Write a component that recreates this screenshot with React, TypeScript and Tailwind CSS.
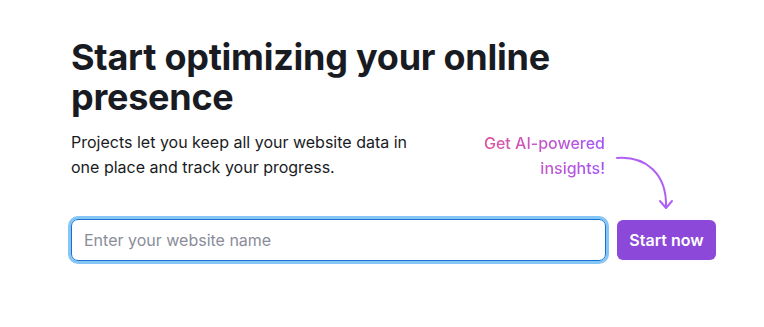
export default function App() {
  return (
    <div className="min-h-[327px] w-full bg-white font-['Inter',sans-serif]">
      <div className="w-[645px] pl-[71px] pt-[37px] box-content">
        <h1 className="w-[520px] text-[36px] font-bold leading-[40px] tracking-[-0.25px] text-[#191b23]">
          Start optimizing your online presence
        </h1>
        <div className="mt-[13px] flex h-[89px] items-start justify-between">
          <p className="w-[345px] text-[16px] leading-[25px] text-[#191b23]">
            Projects let you keep all your website data in one place and track your progress.
          </p>
          <div className="flex items-start">
            <p className="mt-[1px] bg-gradient-to-r from-[#e0519c] to-[#a552f5] bg-clip-text text-right text-[16px] leading-[25px] font-medium text-transparent">
              Get AI-powered
              <br />
              insights!
            </p>
            <svg width="64" height="60" viewBox="0 0 64 60" fill="none" className="mt-[25px] mr-[40px] ml-[7px]">
              <path d="M5 3 C 33 1, 55 18, 54 52" stroke="#b061f5" strokeWidth="2" strokeLinecap="round" />
              <path d="M48 46 L54 53 L60 46" stroke="#b061f5" strokeWidth="2" strokeLinecap="round" strokeLinejoin="round" />
            </svg>
          </div>
        </div>
        <div className="flex items-center gap-[11px]">
          <input
            autoFocus
            placeholder="Enter your website name"
            className="h-[42px] flex-1 rounded-[7px] border border-[#1a6fd1] px-[12px] text-[16px] text-[#191b23] placeholder:text-[#8a8d99] outline-none ring-[3px] ring-[#85c6f5]"
          />
          <button className="h-[40px] w-[99px] rounded-[6px] bg-[#8c48d9] text-[16px] font-semibold text-white">
            Start now
          </button>
        </div>
      </div>
    </div>
  );
}
